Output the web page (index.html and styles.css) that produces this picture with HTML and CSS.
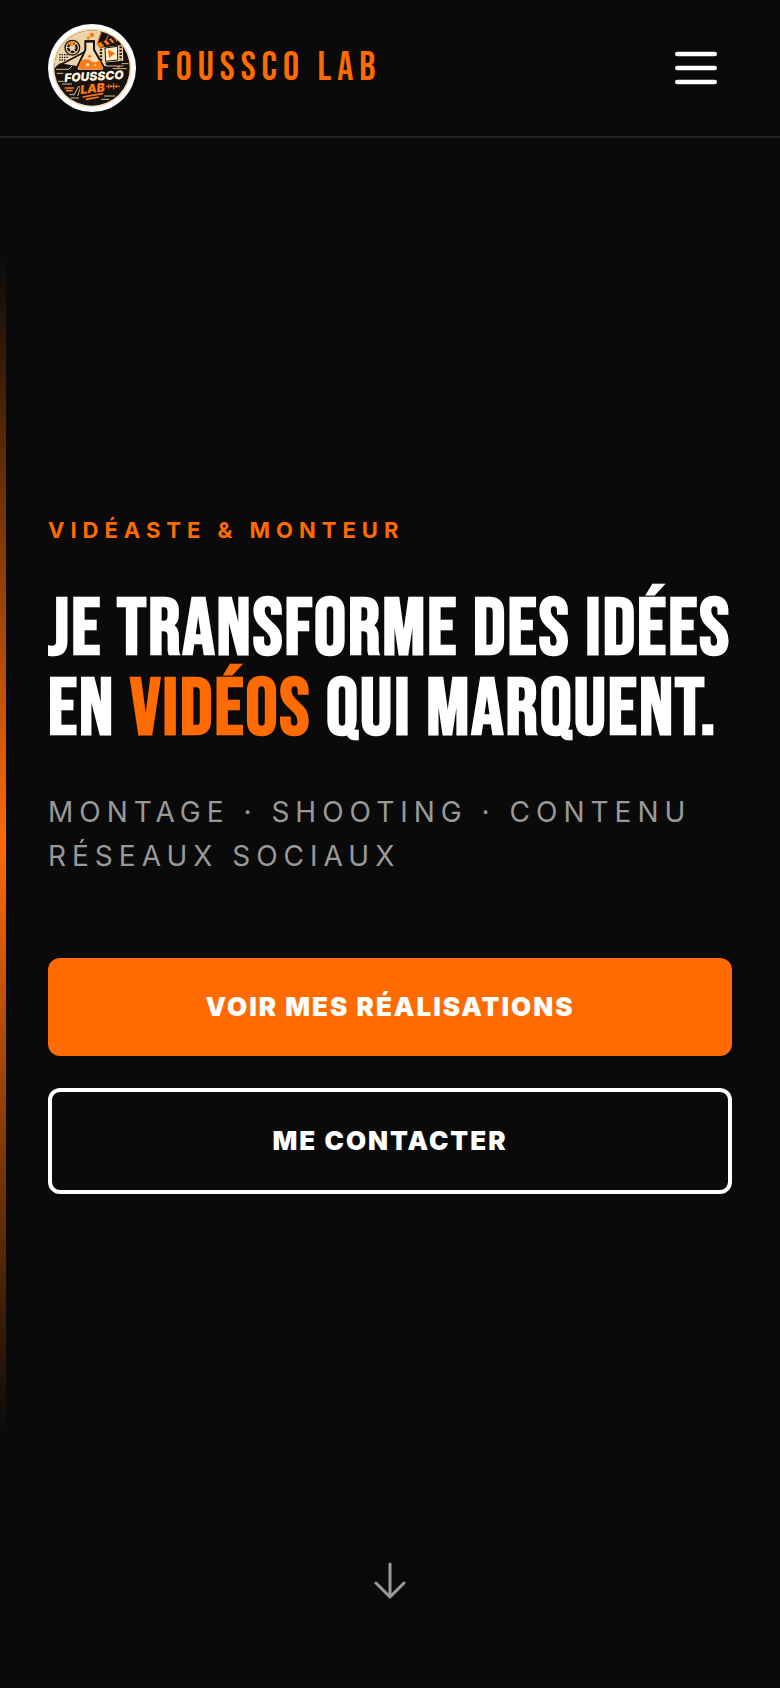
FILE: index.html
```
<!DOCTYPE html>
<html lang="fr">
<head>
    <meta charset="UTF-8">
    <meta name="viewport" content="width=device-width, initial-scale=1.0">
    <title>Foussco Lab</title>
    <link rel="stylesheet" href="styles.css">
</head>
<body>
    <header class="navbar">
        <a class="brand" href="#accueil">
            <svg class="brand-logo" viewBox="24 24 264 264" aria-hidden="true">
                <defs>
                    <clipPath id="disc"><circle cx="156" cy="156" r="113"/></clipPath>
                </defs>
                <circle cx="156" cy="156" r="132" fill="#fff"/>
                <circle cx="156" cy="156" r="118" fill="#f3d9b0"/>
                <g clip-path="url(#disc)">
                    <rect x="40" y="40" width="232" height="232" fill="#17120e"/>
                    <!-- light upper part -->
                    <path d="M40 40H185L172 82L200 150H110L60 142L40 160Z" fill="#efd3a8"/>
                    <path d="M50 152L138 106" stroke="#17120e" stroke-width="5"/>
                    <path d="M58 116h34M58 124h28M58 132h20" stroke="#17120e" stroke-width="4" stroke-dasharray="4 3"/>
                    <path d="M184 48L170 88M205 58l-14 28" stroke="#ff7a14" stroke-width="3"/>
                    <!-- shutter -->
                    <circle cx="97" cy="95" r="22" fill="#efd3a8" stroke="#17120e" stroke-width="4"/>
                    <circle cx="97" cy="95" r="13" fill="none" stroke="#17120e" stroke-width="7" stroke-dasharray="11 3"/>
                    <path d="M83 84q8-12 22-6l-8 13z" fill="#ff7a14"/>
                    <!-- clapperboard and film -->
                    <path d="M172 82L228 62L234 75L178 96Z" fill="#ff7a14"/>
                    <path d="M186 77l12 12M202 71l12 12M217 66l10 11" stroke="#17120e" stroke-width="7"/>
                    <path d="M176 96L248 87L250 134L188 140Z" fill="#f3d9b0"/>
                    <path d="M183 98V138M242 91V133" stroke="#17120e" stroke-width="7" stroke-dasharray="6 4"/>
                    <path d="M195 96L233 91V132L197 136Z" fill="#fff0d5" stroke="#17120e" stroke-width="3"/>
                    <path d="M204 101L225 112L207 126Z" fill="#ff6b00"/>
                    <!-- flask -->
                    <path d="M136 76H162V101L192 154Q194 164 184 164H117Q107 163 111 154L136 102Z" fill="#f8dfb8" stroke="#17120e" stroke-width="6"/>
                    <path d="M122 135Q138 124 152 134T180 132L188 155Q188 160 183 160H119Q113 158 116 151Z" fill="#ff7a14"/>
                    <path d="M135 76H164" stroke="#17120e" stroke-width="7"/>
                    <circle cx="149" cy="121" r="5" fill="#ff7a14"/>
                    <circle cx="143" cy="146" r="5" fill="#fff0d5"/>
                    <circle cx="166" cy="148" r="3" fill="#fff0d5"/>
                    <circle cx="145" cy="66" r="5" fill="#ff7a14"/>
                    <circle cx="156" cy="57" r="7" fill="#ff7a14"/>
                    <!-- circuit marks -->
                    <path d="M48 160h38l10-10M50 172h20M198 150h52M218 158h42M245 143h20M54 196h20M66 204h30" stroke="#d9bd94" stroke-width="3" fill="none"/>
                    <path d="M74 216h28M78 224h20M230 152h10" stroke="#ff7a14" stroke-width="5"/>
                    <path d="M102 238l14-28 5 6-8 24M88 236h14M192 240h34M92 246h25M184 250h24" stroke="#d9bd94" stroke-width="3" fill="none"/>
                    <path d="M198 211h42M206 204v14M213 207v8M221 202v18M229 206v10" stroke="#ff7a14" stroke-width="3"/>
                    <path d="M128 243L190 232M138 250L176 243" stroke="#ff7a14" stroke-width="5"/>
                </g>
                <text class="logo-lab" x="158" y="230" transform="rotate(-6 158 222)">LAB</text>
                <text class="logo-name" x="162" y="194" transform="rotate(-3 160 188)">FOUSSCO</text>
            </svg>
            <span class="brand-name">FOUSSCO LAB</span>
        </a>
        <button class="menu-btn" type="button" aria-label="Ouvrir le menu">
            <svg viewBox="0 0 24 24" fill="none" stroke="currentColor" stroke-width="2" stroke-linecap="round">
                <path d="M4 6h16M4 12h16M4 18h16"/>
            </svg>
        </button>
    </header>

    <main class="hero" id="accueil">
        <p class="hero-label">VIDÉASTE &amp; MONTEUR</p>
        <h1 class="hero-title">JE TRANSFORME DES IDÉES EN <span class="accent">VIDÉOS</span> QUI MARQUENT.</h1>
        <p class="hero-text">MONTAGE · SHOOTING · CONTENU RÉSEAUX SOCIAUX</p>
        <div class="hero-actions">
            <a class="btn btn-primary" href="#realisations">VOIR MES RÉALISATIONS</a>
            <a class="btn btn-outline" href="#contact">ME CONTACTER</a>
        </div>
        <a class="scroll-down" href="#realisations" aria-label="Défiler vers le bas">
            <svg viewBox="0 0 32 40" fill="none" stroke="currentColor" stroke-width="3" stroke-linecap="round" stroke-linejoin="round">
                <path d="M16 4v33M2 23l14 14 14-14"/>
            </svg>
        </a>
    </main>
</body>
</html>
```
FILE: styles.css
```
* {
    box-sizing: border-box;
    margin: 0;
    padding: 0;
}

body {
    position: relative;
    display: flex;
    flex-direction: column;
    min-height: 100vh;
    background: #0a0a0a;
    color: #fff;
    font-family: Inter, "Liberation Sans", sans-serif;
}

a {
    color: inherit;
    text-decoration: none;
}

/* orange line on the left edge */
body::before {
    content: "";
    position: absolute;
    left: 0;
    top: 15%;
    bottom: 15%;
    width: 6px;
    background: linear-gradient(to bottom, transparent, #ff6b00, transparent);
}

/* header */
.navbar {
    display: flex;
    align-items: center;
    justify-content: space-between;
    padding: 24px 48px;
    border-bottom: 2px solid #222;
}

.brand {
    display: flex;
    align-items: center;
    gap: 20px;
}

.brand-logo {
    width: 88px;
    height: 88px;
}

.logo-name,
.logo-lab {
    font-family: Inter, sans-serif;
    font-weight: 900;
    font-style: italic;
    text-anchor: middle;
    stroke: #17120e;
    stroke-width: 6px;
    paint-order: stroke;
}

.logo-name {
    font-size: 36px;
    fill: #fff3df;
}

.logo-lab {
    font-size: 36px;
    fill: #ff7a14;
}

.brand-name {
    color: #ff6b00;
    font-family: "Bebas Neue", "Roboto Condensed", sans-serif;
    font-size: 40px;
    letter-spacing: 6px;
}

.menu-btn {
    padding: 8px;
    background: none;
    border: none;
    color: #fff;
    cursor: pointer;
}

.menu-btn svg {
    display: block;
    width: 56px;
    height: 56px;
}

/* hero */
.hero {
    position: relative;
    flex: 1;
    display: flex;
    flex-direction: column;
    justify-content: center;
    padding: 0 48px 120px;
}

.hero-label {
    margin-bottom: 42px;
    color: #ff6b00;
    font-size: 22px;
    font-weight: 700;
    line-height: 36px;
    letter-spacing: 6px;
}

.hero-title {
    margin-bottom: 40px;
    font-family: "Bebas Neue", "Roboto Condensed", sans-serif;
    font-size: 80px;
    font-weight: bold;
    line-height: 80px;
    letter-spacing: 2px;
}

.accent {
    color: #ff6b00;
}

.hero-text {
    margin-bottom: 80px;
    color: #999;
    font-size: 28px;
    line-height: 44px;
    letter-spacing: 6px;
}

.hero-actions {
    display: flex;
    flex-direction: column;
    gap: 32px;
}

.btn {
    padding: 32px;
    border-radius: 12px;
    font-size: 26px;
    font-weight: 900;
    line-height: 34px;
    letter-spacing: 2px;
    text-align: center;
}

.btn-primary {
    background: #ff6b00;
}

.btn-outline {
    border: 4px solid #fff;
}

.scroll-down {
    position: absolute;
    left: 0;
    right: 0;
    bottom: 88px;
    color: #999;
}

.scroll-down svg {
    display: block;
    width: 32px;
    height: 40px;
    margin: 0 auto;
}
```
